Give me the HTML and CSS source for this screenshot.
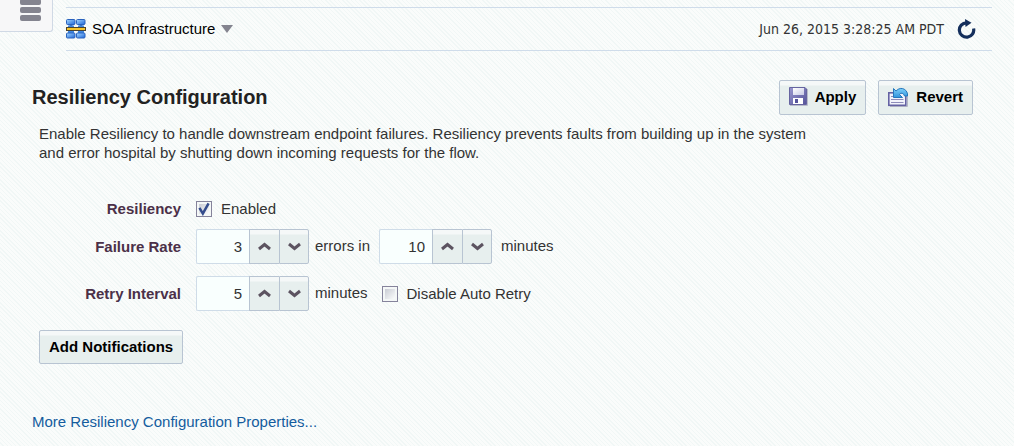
FILE: index.html
```html
<!DOCTYPE html>
<html lang="en">
<head>
<meta charset="utf-8">
<meta name="viewport" content="width=device-width, initial-scale=1">
<title>SOA Infrastructure - Resiliency Configuration</title>
<link rel="stylesheet" href="styles.css">
</head>
<body>
<header class="top">
  <button class="nav-toggle" type="button" aria-label="Target navigation">
    <svg width="21" height="22" viewBox="0 0 21 22" fill="#84848f"><rect x="0" y="0" width="21" height="6" rx="2"/><rect x="0" y="8" width="21" height="6" rx="2"/><rect x="0" y="16" width="21" height="6" rx="2"/></svg>
  </button>
  <div class="context">
    <button class="context-menu" type="button">
      <svg width="20" height="20" viewBox="0 0 20 20">
        <defs><linearGradient id="node" x1="0" y1="0" x2="1" y2="1"><stop offset="0" stop-color="#a5d8ff"/><stop offset="1" stop-color="#1d66d8"/></linearGradient></defs>
        <path d="M5 5v10M15 5v10" stroke="#2f66b5" stroke-width="3"/>
        <path d="M2 7.500h6M12 7.500h6M2 13h6M12 13h6" stroke="#3f86e0" stroke-width="2"/>
        <g fill="url(#node)" stroke="#2a62bd"><rect x=".5" y=".5" width="8.500" height="5" rx="1"/><rect x="10.500" y=".5" width="8.500" height="5" rx="1"/><rect x=".5" y="14" width="8.500" height="5" rx="1"/><rect x="10.500" y="14" width="8.500" height="5" rx="1"/></g>
        <rect x=".5" y="8.500" width="19" height="3" fill="#f5c52c" stroke="#4a4430"/>
      </svg>
      <span>SOA Infrastructure</span>
      <svg width="12" height="8" viewBox="0 0 12 8"><path d="M0 0h12L6 8z" fill="#84848f"/></svg>
    </button>
    <div class="refresh">
      <time datetime="2015-06-26T03:28:25-07:00">Jun 26, 2015 3:28:25 AM PDT</time>
      <button class="icon-button" type="button" aria-label="Refresh">
        <svg width="20" height="20" viewBox="0 0 20 20"><path d="M10.500 3.800A7.200 7.200 0 1 0 17.600 9.500" fill="none" stroke="#142f5c" stroke-width="3.200"/><path d="M9 0l6.500 3.800L9.500 8z" fill="#142f5c"/></svg>
      </button>
    </div>
  </div>
</header>
<main class="page">
  <div class="heading">
    <h1>Resiliency Configuration</h1>
    <div class="actions">
      <button class="button button-icon" type="button">
        <svg width="19" height="19" viewBox="0 0 19 19">
          <defs><linearGradient id="disk" x1="0" y1="0" x2="1" y2="1"><stop offset="0" stop-color="#9a98cf"/><stop offset="1" stop-color="#55539a"/></linearGradient><linearGradient id="label" x1="0" y1="0" x2="1" y2="1"><stop offset="0" stop-color="#fff"/><stop offset="1" stop-color="#c9cbe6"/></linearGradient></defs>
          <path d="M1 18.500h17.500V2" fill="none" stroke="#b9bccb"/>
          <path d="M.5.5h15.500l1.500 1.500v15.500h-17z" fill="url(#disk)" stroke="#6664a0"/>
          <rect x="4" y="1" width="11" height="7" fill="url(#label)"/>
          <rect x="4" y="11" width="10" height="6" fill="#fff"/><rect x="6" y="12" width="3" height="4" fill="#55539a"/>
        </svg>
        Apply
      </button>
      <button class="button button-icon" type="button">
        <svg width="21" height="20" viewBox="0 0 21 20">
          <defs><linearGradient id="arrow" x1="0" y1="0" x2="0" y2="1"><stop offset="0" stop-color="#7fd0fa"/><stop offset="1" stop-color="#2f93dc"/></linearGradient></defs>
          <path d="M2 19.500h17.500V7" fill="none" stroke="#b4b7c6"/>
          <rect x=".8" y="5.800" width="17" height="12.500" fill="#f2f3fb" stroke="#6462a3" stroke-width="1.600"/>
          <path d="M3 9.500h4M3 12.500h12.500M3 15.500h12.500" stroke="#8d8cba"/>
          <path d="M5.500 1.500v9h9l-3-3c1.500-2 4-1.500 5 1.500h3c1-5.500-6-11-11.500-5z" fill="url(#arrow)" stroke="#2577bd"/>
        </svg>
        Revert
      </button>
    </div>
  </div>
  <p class="intro">Enable Resiliency to handle downstream endpoint failures. Resiliency prevents faults from building up in the system and error hospital by shutting down incoming requests for the flow.</p>
  <form class="form">
    <label class="name" for="enabled">Resiliency</label>
    <div class="field">
      <label class="check"><input class="checkbox" id="enabled" type="checkbox" checked>Enabled</label>
    </div>
    <label class="name" for="rate">Failure Rate</label>
    <div class="field">
      <span class="spinner">
        <input id="rate" type="text" inputmode="numeric" value="3">
        <button type="button" aria-label="Increase errors"><svg width="13" height="9" viewBox="0 0 13 9"><path d="M1 7l5.500-4.500L12 7"/></svg></button>
        <button type="button" aria-label="Decrease errors"><svg width="13" height="9" viewBox="0 0 13 9"><path d="M1 2l5.500 4.500L12 2"/></svg></button>
      </span>
      <label class="unit" for="window">errors in</label>
      <span class="spinner">
        <input id="window" type="text" inputmode="numeric" value="10">
        <button type="button" aria-label="Increase minutes"><svg width="13" height="9" viewBox="0 0 13 9"><path d="M1 7l5.500-4.500L12 7"/></svg></button>
        <button type="button" aria-label="Decrease minutes"><svg width="13" height="9" viewBox="0 0 13 9"><path d="M1 2l5.500 4.500L12 2"/></svg></button>
      </span>
      <span class="unit">minutes</span>
    </div>
    <label class="name" for="retry">Retry Interval</label>
    <div class="field">
      <span class="spinner">
        <input id="retry" type="text" inputmode="numeric" value="5">
        <button type="button" aria-label="Increase interval"><svg width="13" height="9" viewBox="0 0 13 9"><path d="M1 7l5.500-4.500L12 7"/></svg></button>
        <button type="button" aria-label="Decrease interval"><svg width="13" height="9" viewBox="0 0 13 9"><path d="M1 2l5.500 4.500L12 2"/></svg></button>
      </span>
      <span class="unit">minutes</span>
      <label class="check"><input class="checkbox" type="checkbox">Disable Auto Retry</label>
    </div>
  </form>
  <button class="button add" type="button">Add Notifications</button>
  <a class="more" href="#properties">More Resiliency Configuration Properties...</a>
</main>
</body>
</html>
```
FILE: styles.css
```css
* { box-sizing: border-box; }

body {
  margin: 0;
  min-height: 100vh;
  background: repeating-linear-gradient(45deg, #fafcfb 0 2px, #f1f7f6 2px 3px);
  color: #333;
  font: 15px/19px "Liberation Sans", Arial, sans-serif;
}

button, input { font: inherit; color: inherit; }
button { cursor: pointer; }
svg { display: block; flex: none; }

.top {
  display: flex;
  align-items: flex-start;
  gap: 13px;
  padding-right: 22px;
}

.nav-toggle {
  display: flex;
  justify-content: center;
  align-items: flex-end;
  width: 53px;
  height: 32px;
  padding: 0 0 10px 8px;
  border: solid #d0d9e5;
  border-width: 0 1px 1px 0;
  border-radius: 0 0 3px 0;
  background: #f7f7f8;
}

.context {
  flex: 1;
  display: flex;
  justify-content: space-between;
  align-items: center;
  height: 44px;
  margin-top: 7px;
  border: solid #cfdcea;
  border-width: 1px 0;
}

.context-menu {
  display: flex;
  align-items: center;
  gap: 6px;
  padding: 0;
  border: 0;
  background: none;
  color: #000;
}

.context-menu span { padding-bottom: 2px; }

.refresh {
  display: flex;
  align-items: center;
  gap: 12px;
  padding-right: 16px;
  font-family: "DejaVu Sans Condensed", "DejaVu Sans", sans-serif;
  font-size: 14px;
}

.icon-button { padding: 0; border: 0; background: none; }

.page {
  display: flex;
  flex-direction: column;
  align-items: flex-start;
  padding: 29px 41px 14px 32px;
}

.heading {
  display: flex;
  justify-content: space-between;
  align-items: center;
  align-self: stretch;
}

h1 {
  margin: 0;
  padding-bottom: 2px;
  color: #222;
  font-size: 20px;
  line-height: 24px;
}

.actions { display: flex; gap: 12px; }

.button {
  height: 35px;
  padding: 0 9px 2px;
  border: 1px solid #b8c4d2;
  border-radius: 2px;
  background: linear-gradient(#f5f8f8 4px, #e7efee 5px);
  color: #000;
  font-weight: bold;
}

.button-icon {
  display: flex;
  align-items: center;
  gap: 7px;
}

.intro {
  max-width: 790px;
  margin: 9px 0 0 7px;
}

.form {
  display: grid;
  grid-template-columns: 149px auto;
  grid-template-rows: 17px;
  column-gap: 15px;
  row-gap: 12px;
  align-items: center;
  margin-top: 38px;
}

.name {
  color: #4b3048;
  font-weight: bold;
  text-align: right;
}

.field { display: flex; align-items: center; }

.check { display: flex; align-items: center; gap: 9px; }

.unit { margin-left: 6px; padding-bottom: 2px; }
.unit + .spinner { margin-left: 9px; }
.unit + .spinner + .unit { margin-left: 9px; }
.unit + .check { margin-left: 14px; }

.checkbox {
  appearance: none;
  width: 16px;
  height: 16px;
  margin: 0;
  border: 1px solid #85839b;
  background: linear-gradient(135deg, #c9ccd4, #fbfcfc) content-box, #f4f7f7;
  padding: 2px;
}

.checkbox:checked {
  background: url("data:image/svg+xml,%3Csvg xmlns='http://www.w3.org/2000/svg' viewBox='0 0 14 14'%3E%3Cpath d='M3 6l3 5 5-9' fill='none' stroke='%23344c8c' stroke-width='2.2'/%3E%3C/svg%3E") border-box, linear-gradient(135deg, #c9ccd4, #fbfcfc) content-box, #f4f7f7;
}

.spinner { display: flex; height: 35px; }

.spinner input {
  width: 53px;
  padding: 0 7px;
  border: 1px solid #cfdce8;
  border-right: 0;
  border-radius: 2px 0 0 2px;
  background: #f9fffe;
  text-align: right;
}

.spinner button {
  display: grid;
  place-items: center;
  width: 30px;
  padding: 0;
  border: 1px solid #b8c4d2;
  border-right: 0;
  background: linear-gradient(#f5f8f8 4px, #e7efee 5px);
}

.spinner button:last-child {
  border-right: 1px solid #b8c4d2;
  border-radius: 0 2px 2px 0;
}

.spinner path {
  fill: none;
  stroke: #5c5360;
  stroke-width: 3;
}

.add { height: 34px; margin: 19px 0 0 7px; }

.more {
  margin-top: 48px;
  color: #145c9e;
  text-decoration: none;
}
```
